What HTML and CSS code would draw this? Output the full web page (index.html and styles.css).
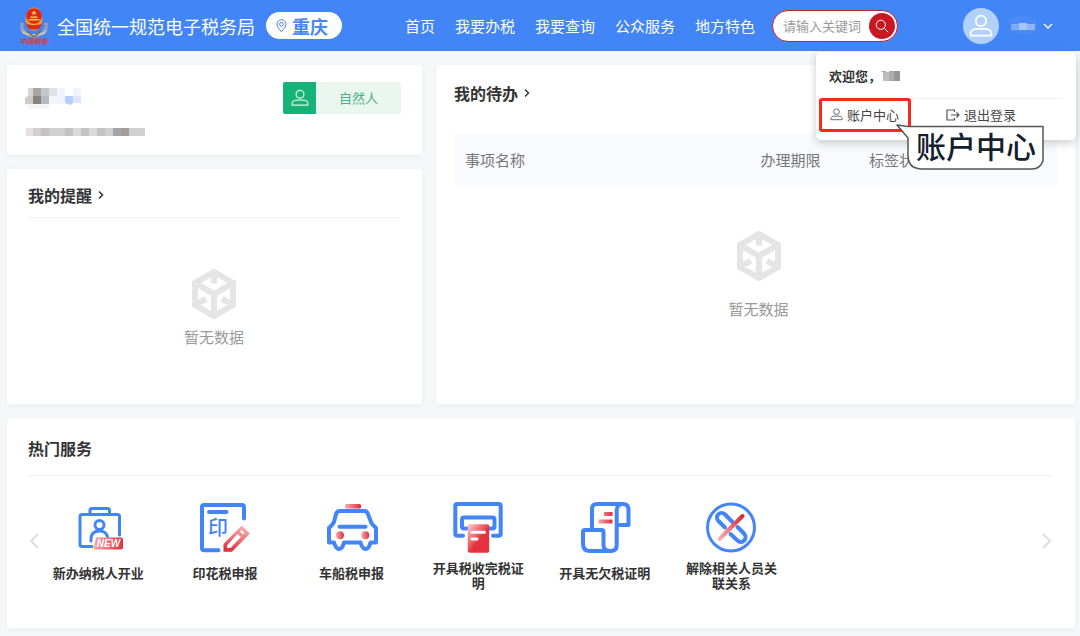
FILE: index.html
```html
<!DOCTYPE html>
<html lang="zh-CN">
<head>
<meta charset="utf-8">
<meta name="viewport" content="width=device-width, initial-scale=1">
<title>全国统一规范电子税务局</title>
<link rel="stylesheet" href="styles.css">
</head>
<body>
<svg class="defs" width="0" height="0" aria-hidden="true">
  <defs>
    <linearGradient id="red-down" x1="0" y1="0" x2="1" y2="1"><stop offset="0.1" stop-color="#f8b4b8"/><stop offset="0.55" stop-color="#e6323f"/></linearGradient>
    <linearGradient id="red-side" x1="0" y1="0" x2="1" y2="0"><stop offset="0" stop-color="#f7a9ae"/><stop offset="1" stop-color="#e22d3b"/></linearGradient>
    <linearGradient id="red-fall" x1="0.6" y1="0" x2="0.3" y2="1"><stop offset="0" stop-color="#f7b0b4"/><stop offset="1" stop-color="#e22d3b"/></linearGradient>
    <linearGradient id="red-slash" gradientUnits="userSpaceOnUse" x1="14" y1="38" x2="37" y2="15"><stop offset="0" stop-color="#f8b4b8"/><stop offset="1" stop-color="#e02433"/></linearGradient>
    <symbol id="person" viewBox="0 0 18 18">
      <circle cx="9" cy="5.2" r="3.9"/>
      <path d="M1.2 16.2v-1.7c0-2 2.2-3.3 4.6-3.3h6.4c2.4 0 4.6 1.3 4.6 3.3v1.7z"/>
    </symbol>
    <symbol id="cube" viewBox="0 0 44 50">
      <path d="M22 3 41 14v22L22 47 3 36V14zM3 14l19 11 19-11M22 25v22M22 3v11.500M4 35l10-5M40 35l-10-5"/>
    </symbol>
    <symbol id="chevron" viewBox="0 0 8 10"><path d="M2 1.500 5.500 5 2 8.500"/></symbol>
  </defs>
</svg>

<header class="topbar">
  <svg class="emblem" viewBox="0 0 30 40" aria-hidden="true">
    <path d="M3 17c-1 7 3 11 10 13M27 17c1 7-3 11-10 13" fill="none" stroke="#a9a6a0" stroke-width="3.500" stroke-dasharray="2 0.700"/>
    <path d="M1 22c3 4 8 6 14 6s11-2 14-6l-3 6-9 2-2 4-2-4-9-2z" fill="#c9c3b5"/>
    <path d="M8 25 15 31l7-6" fill="none" stroke="#6c6a68" stroke-width="1.500"/>
    <ellipse cx="15" cy="13" rx="8.500" ry="11.500" fill="#f0a034"/>
    <circle cx="15" cy="10" r="7.800" fill="#df241c"/>
    <path d="m15 4 .8 2h2l-1.600 1.200.6 2-1.800-1.200-1.800 1.200.6-2L12.200 6h2zM9.500 13h11v1.500h-11zM11.500 10.500h7v1.500h-7z" fill="#fbcd3f"/>
    <path d="M7 17c4 3 12 3 16 0l-2 5c-3 2-9 2-12 0z" fill="#d92c1b"/>
    <text x="15" y="38" text-anchor="middle" class="emblem-text">中国税务</text>
  </svg>
  <h1 class="site-title">全国统一规范电子税务局</h1>
  <button class="region" type="button">
    <svg width="11" height="14" viewBox="0 0 11 14" aria-hidden="true"><path d="M5.500 12.800C3 9.800 1 7.500 1 5.200a4.500 4.500 0 0 1 9 0c0 2.300-2 4.600-4.500 7.600z"/><circle cx="5.500" cy="5.300" r="1.900"/></svg>
    重庆
  </button>
  <nav class="nav">
    <a href="#">首页</a><a href="#">我要办税</a><a href="#">我要查询</a><a href="#">公众服务</a><a href="#">地方特色</a>
  </nav>
  <form class="search">
    <input type="text" placeholder="请输入关键词" aria-label="关键词">
    <button type="button" aria-label="搜索"><svg width="14" height="14" viewBox="0 0 14 14"><circle cx="5.800" cy="5.800" r="4.600"/><path d="m9.200 9.200 4 4"/></svg></button>
  </form>
  <div class="account">
    <button class="account-toggle" type="button" aria-label="账户菜单">
      <span class="avatar"><svg width="24" height="24"><use href="#person"/></svg></span>
      <svg class="mask" width="30" height="20" viewBox="0 0 30 20"><path fill="#4c8bf7" d="M1 4q14-8 28 0v12q-14 5-22 0z"/><path fill="#7eacf9" d="M4 8h8v6H4z"/><path fill="#a5c5fb" d="M12 7h8v7h-8z"/><path fill="#8db6fa" d="M20 8h8v6h-8z"/></svg>
      <svg class="caret" width="10" height="8" viewBox="0 0 10 8"><path d="M1 2 5 6 9 2"/></svg>
    </button>
    <div class="popup">
      <p class="welcome">欢迎您，<svg width="19" height="12" viewBox="0 0 19 12"><path fill="#aaa" d="M0 1h5v2H2z"/><path fill="#bdbdbd" d="M2 2h6v9H2z"/><path fill="#adadad" d="M8 1h5v10H8z"/><path fill="#969696" d="M13 1h6v10h-6z"/></svg></p>
      <div class="popup-actions">
        <a class="marked" href="#"><svg class="line-icon" width="13" height="13"><use href="#person"/></svg>账户中心</a>
        <a class="logout" href="#"><svg class="line-icon" width="14" height="12" viewBox="0 0 14 12"><path d="M8.500 3V1H1v10h7.500V9M5 6h8M10.500 3.500 13 6l-2.500 2.500"/></svg>退出登录</a>
      </div>
      <div class="callout">
        <svg width="148" height="46" viewBox="0 0 148 46" aria-hidden="true"><path d="M1 1 12 2.500H147V37q-3 8-11 8H25q-13-1-13-14V14z"/></svg>
        <span>账户中心</span>
      </div>
    </div>
  </div>
</header>

<main class="page">
  <div class="side">
    <section class="card profile">
      <svg width="122" height="50" viewBox="0 0 122 50" aria-label="用户信息">
        <path fill="#d9d7d5" d="M3 0h5v8H3z"/><path fill="#a8a5a1" d="M8 0h8v8H8z"/><path fill="#c5c6c8" d="M16 0h8v8h-8z"/><path fill="#dfe1e4" d="M24 0h8v8h-8z"/><path fill="#eff4ff" d="M32 0h8v16h-8zM48 0h8v8h-8z"/><path fill="#cfcac6" d="M0 10l3-2h5v8H0z"/><path fill="#85817d" d="M8 8h8v8H8z"/><path fill="#b5bbc3" d="M16 8h8v8h-8z"/><path fill="#f5f5f5" d="M0 16h24v5H4zM24 8h8v8h-8z"/><path fill="#b7cffb" d="M40 8h8v7l-3 2-5-2z"/><path fill="#dbe6fe" d="M48 8h8v7h-8z"/>
        <path fill="#e5e2e1" d="M1 40h7v8H1z"/><path fill="#d0d0d1" d="M8 40h112v8H8z"/><path fill="#c5c3c3" d="M16 40h8v8h-8zM40 40h8v8h-8zM56 40h8v8h-8zM72 40h8v8h-8z"/><path fill="#dadada" d="M48 40h8v8h-8zM64 40h8v8h-8z"/><path fill="#a3a4a7" d="M88 40h8v8h-8z"/><path fill="#a59b9f" d="M96 40h8v8h-8z"/><path fill="#cbd2d1" d="M104 40h8v8h-8z"/>
      </svg>
      <div class="identity"><span class="identity-icon"><svg width="18" height="18"><use href="#person"/></svg></span><span class="identity-name">自然人</span></div>
    </section>
    <section class="card reminders">
      <h2><a href="#">我的提醒<svg class="chevron" width="8" height="10"><use href="#chevron"/></svg></a></h2>
      <div class="empty"><svg class="cube" width="44" height="50"><use href="#cube"/></svg><p>暂无数据</p></div>
    </section>
  </div>

  <section class="card todo">
    <h2><a href="#">我的待办<svg class="chevron" width="8" height="10"><use href="#chevron"/></svg></a></h2>
    <table>
      <thead><tr><th class="col-name">事项名称</th><th class="col-date">办理期限</th><th>标签状态</th></tr></thead>
    </table>
    <div class="empty"><svg class="cube" width="44" height="50"><use href="#cube"/></svg><p>暂无数据</p></div>
  </section>

  <section class="card services">
    <h2>热门服务</h2>
    <div class="carousel">
      <button type="button" aria-label="上一页"><svg width="12" height="18" viewBox="0 0 12 18"><path d="M10 2 3 9l7 7"/></svg></button>
      <ul>
        <li><a href="#">
          <svg class="service-icon" viewBox="0 0 52 52">
            <path d="M20 45.500H10Q8 45.500 8 43.500V15.500q0-2 2-2h35.500q2 0 2 2V34M18 13V9.500q0-2 2-2h15.500q2 0 2 2V13" class="thin"/>
            <circle cx="27.500" cy="24" r="4.500" class="thin"/><path d="M19 40v-2c0-5 3-8 8.500-8 4 0 7 2 8 5.500" class="thin"/>
            <path class="solid" fill="url(#red-side)" d="M24 36.500h25q2 0 2 2v8q0 2-2 2H21.500z"/>
            <text x="36.500" y="46" text-anchor="middle" class="new-text">NEW</text>
          </svg><span>新办纳税人开业</span></a></li>
        <li><a href="#">
          <svg class="service-icon" viewBox="0 0 52 52">
            <path d="M45 17.500V6q0-2-2-2H5Q3 4 3 6v41q0 2.300 2.300 2.300H19.500M10 11h17.500"/>
            <text x="19" y="34" text-anchor="middle" class="seal-text">印</text>
            <path class="solid" fill="url(#red-fall)" fill-rule="evenodd" d="M24.500 43 42.700 24.500 51 32.500 33 50.700H24.500zM28 44.500V47h3.500L42 36l-3.500-3zM41 30.500l3 3 1.500-1.500-3-3z"/>
          </svg><span>印花税申报</span></a></li>
        <li><a href="#">
          <svg class="service-icon" viewBox="0 0 52 52">
            <path d="M14 10h24q3 0 4 3l3 8q.8 2.300 3 4l2 2v14.500H44.500c-1 4-2 6.500-5 6.500s-4-3-5-6.500H18c-1 4-2 6.500-5 6.500s-4-3-5-6.500H3V27l2-2q2-2 3-4l2-8q1-3 4-3zM13.500 25.700H39.500"/>
            <rect class="solid" fill="url(#red-side)" x="19" y="3" width="16" height="4.500" rx="1.500"/><circle class="solid" fill="url(#red-side)" cx="14" cy="34.300" r="4"/><circle class="solid" fill="url(#red-side)" cx="39.300" cy="34.300" r="4"/>
          </svg><span>车船税申报</span></a></li>
        <li><a href="#">
          <svg class="service-icon" viewBox="0 0 52 52">
            <path d="M11 34.700H5.300q-2 0-2-2V5q0-2 2-2h41.400q2 0 2 2v27.700q0 2-2 2H41M15 27.500h-3q-2 0-2-2v-7q0-2 2-2h28.500q2 0 2 2v7q0 2-2 2H37"/>
            <rect class="solid" fill="url(#red-down)" x="15.700" y="23.300" width="21.500" height="28.500" rx="2"/><path d="M20 31.300h12.500M20 38h5" class="light"/>
          </svg><span>开具税收完税证明</span></a></li>
        <li><a href="#">
          <svg class="service-icon" viewBox="0 0 52 52">
            <path d="M13 29V8q0-5 5-5h26q5.500 0 5.500 6v15H38M44 3q-6 0-6.300 6v35q0 6-6 6H11q-7 0-7-7V31q0-2 2-2h16.500q2 0 2 2v13q0 5 5.500 6"/>
            <path class="solid" fill="url(#red-side)" d="M25 11h8.500v4H25zM19.500 18.500h14v4h-14z"/>
          </svg><span>开具无欠税证明</span></a></li>
        <li><a href="#">
          <svg class="service-icon" viewBox="0 0 52 52">
            <circle cx="26" cy="26.500" r="23.500" class="thin"/>
            <path d="m20 26.500-6.500-6.500c-4.500-5 2-11 6.500-6.500l7.500 7.500M32.500 26l6.500 6.500c4.500 5-2 11.500-6.500 7L25.500 33"/>
            <path stroke="url(#red-slash)" d="M14.500 38 37.500 15"/>
          </svg><span>解除相关人员关联关系</span></a></li>
      </ul>
      <button type="button" aria-label="下一页"><svg width="12" height="18" viewBox="0 0 12 18"><path d="m2 2 7 7-7 7"/></svg></button>
    </div>
  </section>
</main>
</body>
</html>
```
FILE: styles.css
```css
* { box-sizing: border-box; }

body {
  margin: 0;
  background: #f6f7f9;
  color: #333;
  font: 15px/20px "Noto Sans CJK SC", "Liberation Sans", sans-serif;
}

h1, h2, p, ul { margin: 0; padding: 0; }
ul { list-style: none; }
a { color: inherit; text-decoration: none; }
button { margin: 0; padding: 0; border: 0; background: none; font: inherit; cursor: pointer; }
svg { display: block; flex: none; }
.defs { position: absolute; }

/* Top bar */
.topbar {
  display: flex;
  align-items: center;
  height: 51px;
  padding: 0 27px 0 19px;
  background: #4285f6;
  color: #fff;
}
.emblem { width: 30px; height: 40px; margin-right: 8px; }
.emblem-text { font-size: 7px; font-style: italic; font-weight: 700; fill: #e0382f; }
.site-title { font-size: 18px; font-weight: 400; line-height: 26px; white-space: nowrap; }
.region {
  display: flex;
  align-items: center;
  gap: 5px;
  height: 27px;
  margin-left: 11px;
  padding: 0 14px 0 10px;
  border-radius: 14px;
  background: #fff;
  color: #4a88ee;
  font-size: 18px;
  font-weight: 700;
  white-space: nowrap;
}
.region svg { fill: none; stroke: #4a7fd8; stroke-width: 1; }
.nav { display: flex; gap: 20px; margin-left: 63px; white-space: nowrap; }
.search {
  display: flex;
  align-items: center;
  width: 126px;
  height: 32px;
  margin-left: 17px;
  padding: 0 2px 0 10px;
  border: 1px solid #c9202f;
  border-radius: 16px;
  background: #fff;
}
.search input {
  flex: 1;
  min-width: 0;
  padding: 0;
  border: 0;
  outline: 0;
  background: none;
  font: 13px/20px "Noto Sans CJK SC", "Liberation Sans", sans-serif;
}
.search input::placeholder { color: #999; }
.search button {
  display: grid;
  place-items: center;
  width: 26px;
  height: 26px;
  border-radius: 50%;
  background: #cb1724;
}
.search button svg { fill: none; stroke: #fff; stroke-width: 1; }

.account { position: relative; margin-left: auto; }
.account-toggle { display: flex; align-items: center; }
.avatar {
  display: grid;
  place-items: center;
  width: 36px;
  height: 36px;
  margin-right: 8px;
  border-radius: 50%;
  background: #b1d0fa;
}
.avatar svg { fill: none; stroke: #fff; stroke-width: 1.300; }
.caret { margin-left: 6px; fill: none; stroke: #fff; stroke-width: 1.300; }

.popup {
  position: absolute;
  top: 44px;
  right: -23px;
  z-index: 2;
  width: 260px;
  height: 88px;
  padding: 14px 13px 0;
  border-radius: 5px;
  background: #fff;
  box-shadow: 0 3px 10px #0003;
  color: #444;
  font-size: 13px;
}
.welcome { display: flex; align-items: center; font-weight: 700; color: #333; }
.popup-actions { display: flex; margin-top: 12px; margin-left: -10px; }
.marked, .logout { display: flex; align-items: center; gap: 4px; height: 34px; }
.marked { width: 92px; padding-left: 8px; border: 3px solid #fa2819; border-radius: 3px; }
.logout { flex: 1; padding-left: 35px; border-top: 1px solid #f2f2f2; }
.line-icon { fill: none; stroke: #555; stroke-width: 1.200; }

.callout { position: absolute; top: 72px; left: 80px; width: 148px; height: 46px; }
.callout path { fill: #fff; stroke: #555; stroke-width: 1.500; stroke-linejoin: round; }
.callout span {
  position: absolute;
  top: 0;
  left: 20px;
  color: #14202c;
  font-size: 30px;
  font-weight: 500;
  line-height: 42px;
  white-space: nowrap;
}

/* Page */
.page {
  display: grid;
  grid-template-columns: 415fr 639fr;
  gap: 14px;
  padding: 14px 5px 8px 7px;
}
.card { border-radius: 3px; background: #fff; box-shadow: 0 1px 5px #0000000d; }
.card h2 { font-size: 16px; font-weight: 700; line-height: 24px; }
.card h2 a { display: inline-flex; align-items: center; gap: 5px; }
.chevron { fill: none; stroke: #333; stroke-width: 1.500; }
.side { display: flex; flex-direction: column; gap: 14px; }

.profile { display: flex; justify-content: space-between; align-items: flex-start; height: 90px; padding: 17px 21px 0 18px; }
.profile > svg { margin-top: 6px; }
.identity { display: flex; height: 32px; border-radius: 2px; overflow: hidden; }
.identity-icon { display: grid; place-items: center; width: 33px; background: #17b277; }
.identity-icon svg { fill: none; stroke: #d3f2e6; stroke-width: 1.300; }
.identity-name { width: 85px; background: #e9f7f0; color: #45b27f; font-size: 13px; line-height: 32px; text-align: center; }

.reminders { flex: 1; padding: 14px 22px 57px 21px; }
.reminders h2 { padding-bottom: 10px; border-bottom: 1px solid #f1f1f1; }
.reminders .empty { padding-top: 51px; }

.empty { display: flex; flex-direction: column; align-items: center; gap: 8px; color: #999; }
.cube { fill: none; stroke: #e5e5e5; stroke-width: 6; }

.todo { padding: 16px 18px 0; }
.todo table { width: 100%; margin-top: 29px; border-collapse: collapse; table-layout: fixed; background: #f8fafe; color: #777; }
.todo th { height: 51px; padding: 0 0 0 11px; font-weight: 400; text-align: left; }
.col-name { width: 49%; }
.col-date { width: 18%; }
.todo .empty { gap: 18px; padding-top: 46px; padding-left: 6px; }

.services { grid-column: 1 / -1; min-height: 210px; padding: 18px 22px 0 21px; }
.services h2 { padding-bottom: 15px; border-bottom: 1px solid #f1f1f1; }
.carousel { display: flex; align-items: center; margin-top: 25px; }
.carousel button svg { fill: none; stroke: #ddd; stroke-width: 2; }
.carousel > button { margin-top: -10px; }
.carousel ul { flex: 1; display: grid; grid-template-columns: repeat(8, 1fr); margin: 0 -7px 0 -5px; }
.carousel li a { display: flex; flex-direction: column; align-items: center; gap: 7px; }
.carousel li span {
  display: grid;
  place-items: center;
  width: 92px;
  min-height: 24px;
  font-size: 13px;
  font-weight: 700;
  line-height: 15px;
  text-align: center;
}
.service-icon { width: 52px; height: 52px; fill: none; stroke: #4285f6; stroke-width: 4; stroke-linecap: round; stroke-linejoin: round; }
.service-icon .thin { stroke-width: 3; }
.service-icon .solid { stroke: none; }
.service-icon .light { stroke: #fff; stroke-width: 3; }
.new-text { fill: #fff; stroke: none; font: italic 700 10px "Liberation Sans", sans-serif; }
.seal-text { fill: #4285f6; stroke: none; font-size: 20px; font-weight: 500; }
```
